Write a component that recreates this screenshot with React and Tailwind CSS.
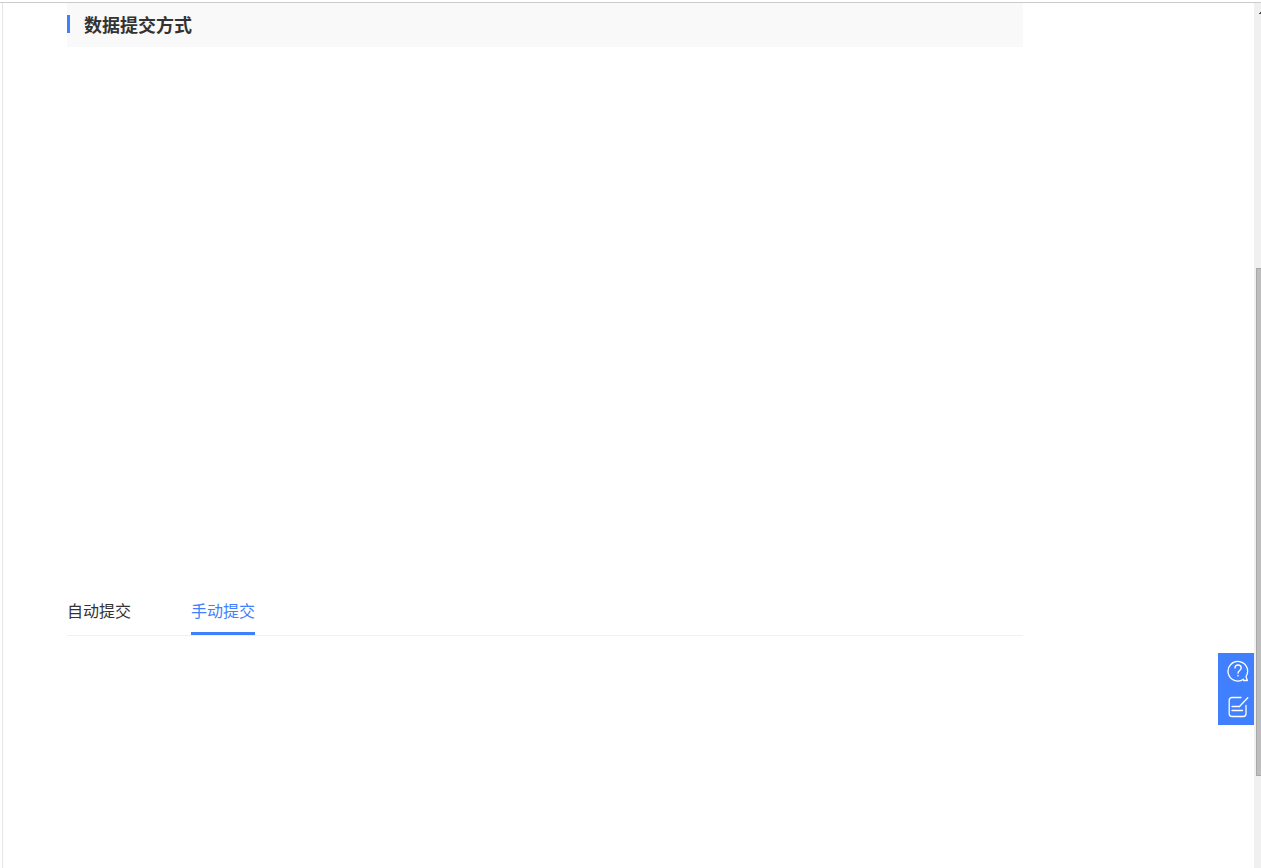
import { useState } from "react";

const tabs = ["自动提交", "手动提交"];

function HelpIcon() {
  return (
    <svg width="22" height="22" viewBox="0 0 22 22" fill="none" stroke="currentColor" strokeWidth="1.3" strokeLinecap="round" strokeLinejoin="round" aria-hidden="true">
      <path d="M16.5 19.2A9.8 9.8 0 1 1 19 16.6L20.4 20.5H16.5" />
      <path d="M8 8c0-1.900 1.200-3 3-3s3.200 1.100 3.200 3c0 2.300-3.200 2.800-3.200 5.200" />
      <path d="M11 15.300v.6" />
    </svg>
  );
}

function FeedbackIcon() {
  return (
    <svg width="22" height="22" viewBox="0 0 22 22" fill="none" stroke="currentColor" strokeWidth="1.3" strokeLinecap="round" strokeLinejoin="round" aria-hidden="true">
      <path d="M14 1.500H5a2.800 2.800 0 0 0-2.800 2.800v13.400a2.800 2.800 0 0 0 2.800 2.800h11.200a2.800 2.800 0 0 0 2.800-2.800V9.500" />
      <path d="M20.800 1.800L12.500 10.500" />
      <path d="M5 10.500H12.500M5 14.500h10.500" />
    </svg>
  );
}

export default function App() {
  const [active, setActive] = useState(1);
  return (
    <div className="flex min-h-screen flex-col bg-white pt-0.5 font-['Noto_Sans_CJK_SC',sans-serif] text-[#333]">
      <div className="flex grow border-t border-[#ccc]">
        <main className="ml-0.5 grow border-l border-[#e5e5e5] pl-16">
          <div className="mr-[231px]">
            <header className="flex h-11 items-center bg-[#f9f9f9] pb-0.5">
              <span className="h-[18px] w-[3px] bg-[#4080ff]" />
              <h1 className="ml-3.5 text-lg leading-6 font-bold">数据提交方式</h1>
            </header>
            <div role="tablist" className="mt-[540px] flex gap-[60px] border-b border-[#f0f0f0]">
              {tabs.map((label, i) => (
                <button
                  key={label}
                  type="button"
                  role="tab"
                  aria-selected={i === active}
                  onClick={() => setActive(i)}
                  className={
                    i === active
                      ? "border-b-[3px] border-[#4080ff] pt-[11px] pb-2.5 text-base leading-6 text-[#4080ff]"
                      : "border-b-[3px] border-transparent pt-[11px] pb-2.5 text-base leading-6"
                  }
                >
                  {label}
                </button>
              ))}
            </div>
          </div>
        </main>
        <div className="flex w-[7px] shrink-0 flex-col bg-[#f0f0f0]">
          <div className="flex h-[265px] justify-end pt-2">
            <svg width="2" height="3" viewBox="0 0 2 3" fill="#505050" aria-hidden="true">
              <path d="M0 3V2H1V1H2V3Z" />
            </svg>
          </div>
          <div className="ml-0.5 h-[508px] border border-r-0 border-[#a8a8a8] bg-[#bdbdbd]" />
        </div>
      </div>
      <aside className="fixed right-[7px] bottom-[143px] flex w-9 flex-col bg-[#4080ff] text-white">
        <button type="button" aria-label="帮助" className="flex h-9 items-center justify-end pr-[5px]">
          <HelpIcon />
        </button>
        <button type="button" aria-label="反馈" className="flex h-9 items-center justify-end pr-[5px]">
          <FeedbackIcon />
        </button>
      </aside>
    </div>
  );
}
